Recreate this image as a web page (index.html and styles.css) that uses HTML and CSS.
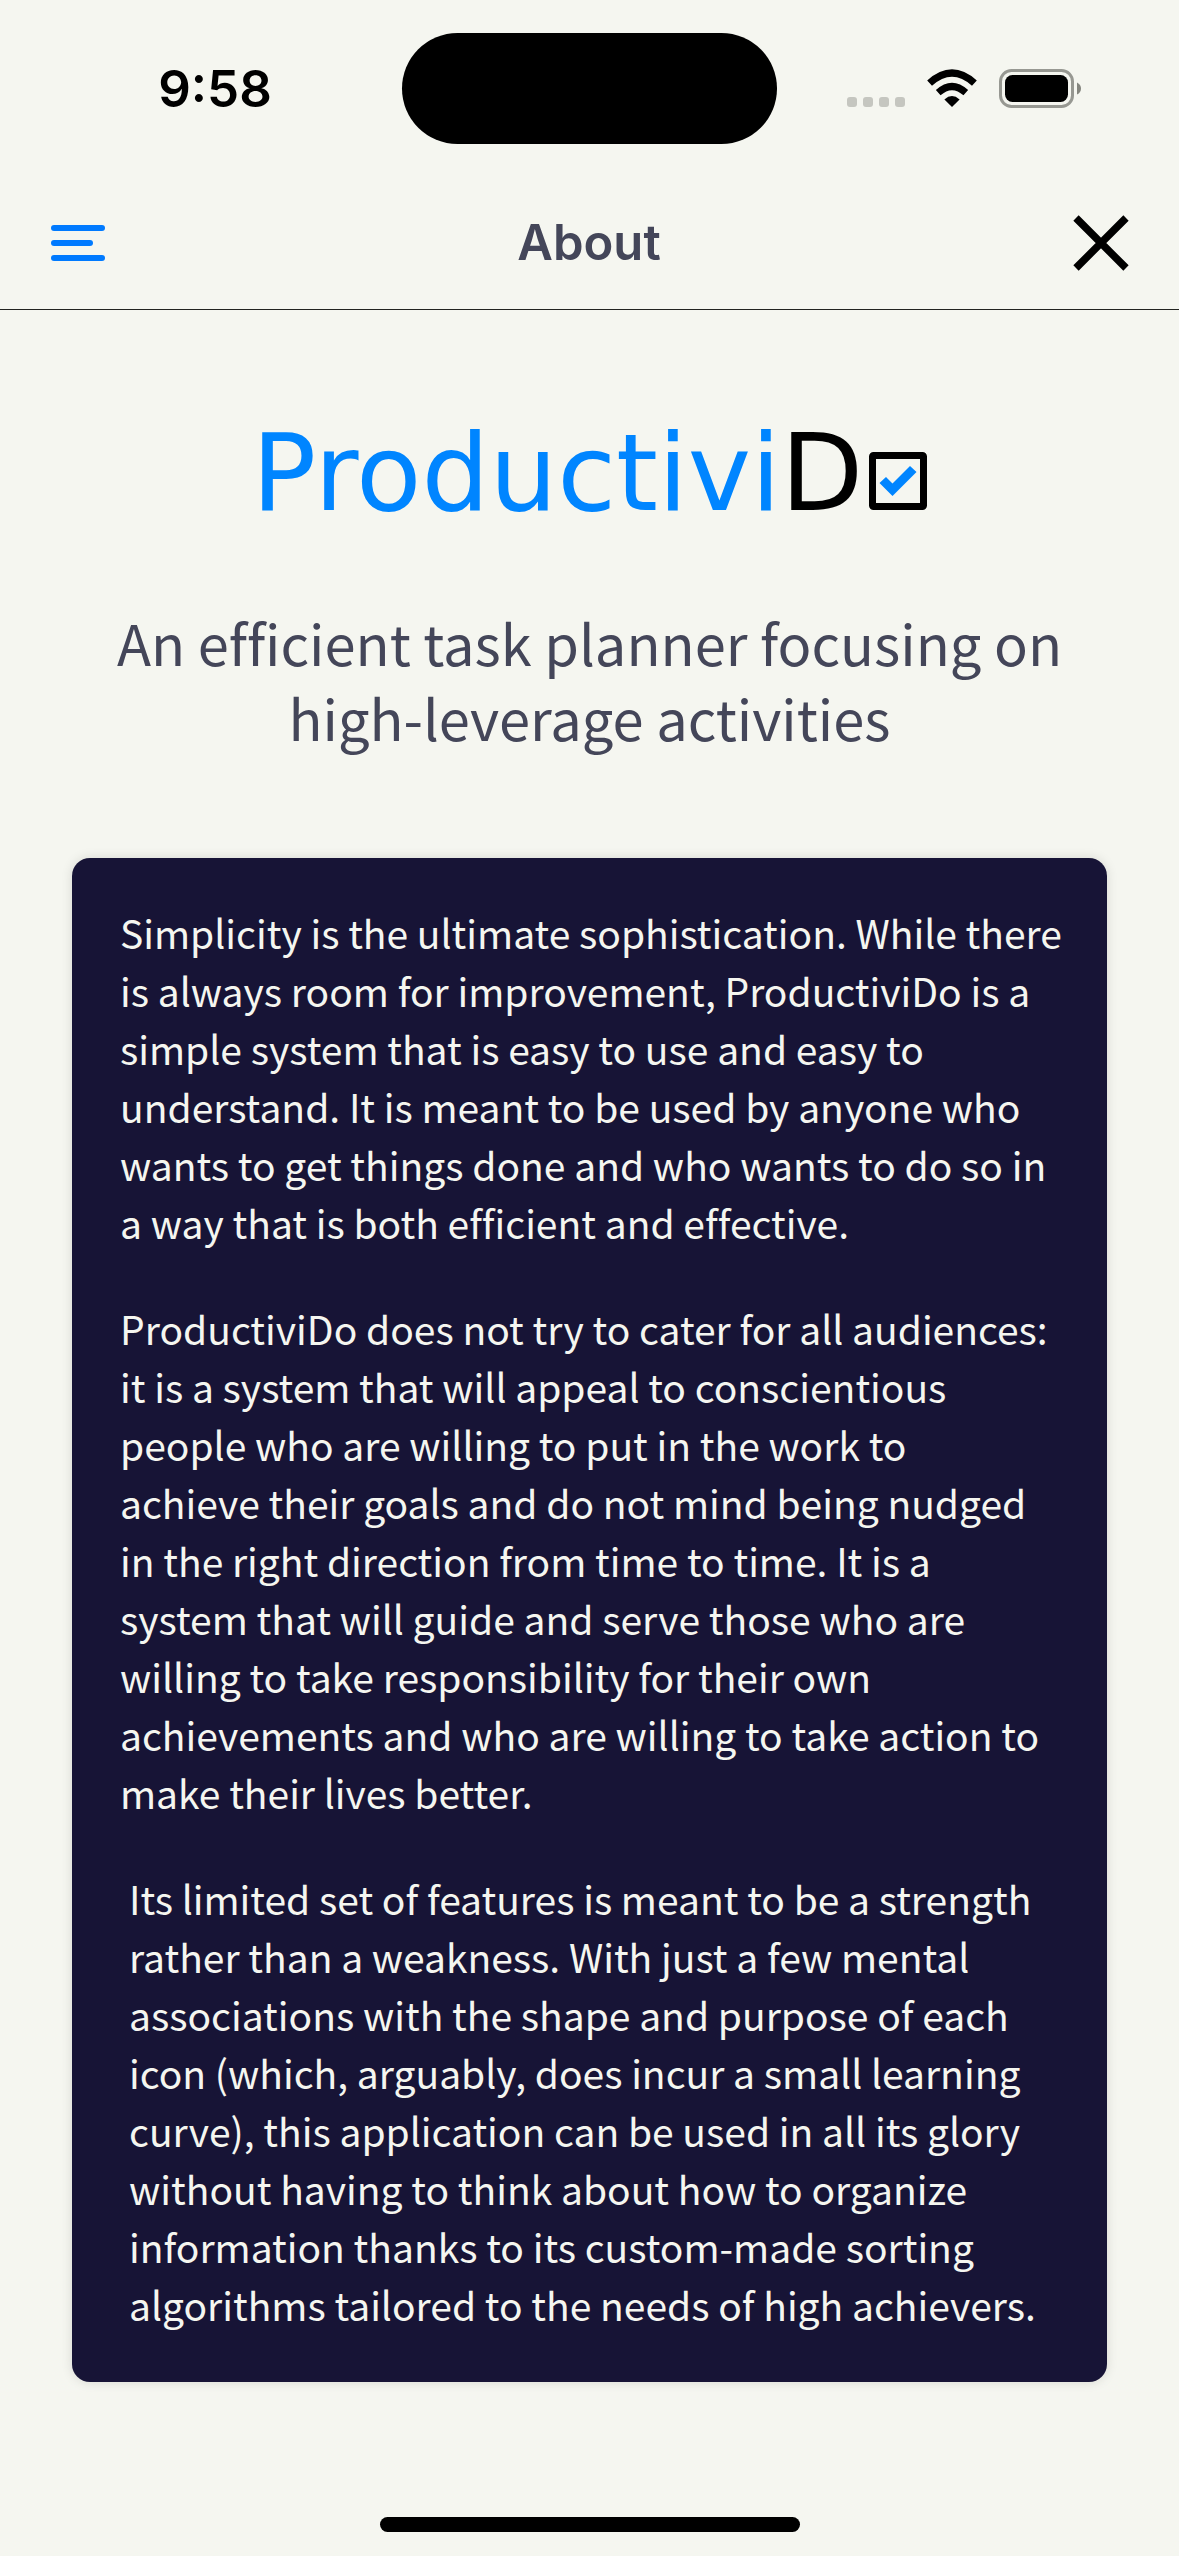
FILE: index.html
```html
<!DOCTYPE html>
<html lang="en">
<head>
<meta charset="utf-8">
<meta name="viewport" content="width=device-width, initial-scale=1">
<title>About – ProductiviDo</title>
<link rel="stylesheet" href="styles.css">
</head>
<body>
<div class="screen">
  <div class="status">
    <time class="clock">9:58</time>
    <div class="island"></div>
    <div class="indicators">
      <svg width="58" height="40" viewBox="0 0 58 40" fill="#c5c6c0" aria-hidden="true">
        <rect y="28" width="10" height="10" rx="3"/>
        <rect x="16" y="28" width="10" height="10" rx="3"/>
        <rect x="32" y="28" width="10" height="10" rx="3"/>
        <rect x="48" y="28" width="10" height="10" rx="3"/>
      </svg>
      <svg width="50" height="40" viewBox="0 0 50 40" aria-hidden="true">
        <path d="M25 38 17.400 30.400Q25 23.600 32.600 30.400Z"/>
        <path d="M11.200 23.700Q25 11.300 38.800 23.700" fill="none" stroke="#000" stroke-width="7"/>
        <path d="M2.600 14.200Q25-6 47.400 14.200" fill="none" stroke="#000" stroke-width="7.200"/>
      </svg>
      <svg width="82" height="40" viewBox="0 0 82 40" aria-hidden="true">
        <rect x="1.500" y="1.500" width="72" height="36" rx="11" fill="none" stroke="#979892" stroke-width="3"/>
        <rect x="6" y="6" width="63" height="27" rx="7.500"/>
        <path d="M78 13.500Q82 15.500 82 19.500T78 25.500Z" fill="#85867f"/>
      </svg>
    </div>
  </div>

  <header class="header">
    <button class="icon-button" type="button" aria-label="Menu">
      <svg width="54" height="36" viewBox="0 0 54 36" fill="#007aff">
        <rect width="54" height="6" rx="3"/>
        <rect y="15" width="42" height="6" rx="3"/>
        <rect y="30" width="54" height="6" rx="3"/>
      </svg>
    </button>
    <h1 class="title">About</h1>
    <button class="icon-button" type="button" aria-label="Close">
      <svg width="56" height="56" viewBox="0 0 56 56" stroke="#000" stroke-width="7.500">
        <path d="M3 3 53 53M53 3 3 53"/>
      </svg>
    </button>
  </header>

  <main class="content">
    <div class="logo">
      <span class="brand">Productivi</span><span class="brand-end">D</span>
      <svg class="box" width="58" height="58" viewBox="0 0 58 58" aria-hidden="true">
        <rect x="3.500" y="3.500" width="51" height="51" rx="1" fill="none" stroke="#000" stroke-width="7"/>
        <path d="M10.500 31 17 25 23.500 31.500 41 14 47.500 20 23.500 44Z" fill="#0085ff"/>
      </svg>
    </div>
    <p class="tagline">An efficient task planner focusing on<br>high-leverage activities</p>
    <section class="card">
      <p>Simplicity is the ultimate sophistication. While there<br>is always room for improvement, ProductiviDo is a<br>simple system that is easy to use and easy to<br>understand. It is meant to be used by anyone who<br>wants to get things done and who wants to do so in<br>a way that is both efficient and effective.</p>
      <p>ProductiviDo does not try to cater for all audiences:<br>it is a system that will appeal to conscientious<br>people who are willing to put in the work to<br>achieve their goals and do not mind being nudged<br>in the right direction from time to time. It is a<br>system that will guide and serve those who are<br>willing to take responsibility for their own<br>achievements and who are willing to take action to<br>make their lives better.</p>
      <p class="inset">Its limited set of features is meant to be a strength<br>rather than a weakness. With just a few mental<br>associations with the shape and purpose of each<br>icon (which, arguably, does incur a small learning<br>curve), this application can be used in all its glory<br>without having to think about how to organize<br>information thanks to its custom-made sorting<br>algorithms tailored to the needs of high achievers.</p>
    </section>
  </main>

  <div class="home-bar"></div>
</div>
</body>
</html>
```

FILE: styles.css
```css
* {
  box-sizing: border-box;
}

body {
  margin: 0;
  background: #f5f6f0;
  color: #444659;
  font-family: "Noto Sans CJK SC", "Noto Sans", sans-serif;
  font-variant-ligatures: none;
}

h1,
p {
  margin: 0;
}

svg {
  display: block;
}

.screen {
  display: flex;
  flex-direction: column;
  min-height: 100vh;
}

.status {
  display: grid;
  grid-template-columns: 1fr 375px 1fr;
  align-items: center;
  height: 177px;
}

.clock {
  padding-left: 28px;
  color: #000;
  font: 600 51px/60px Inter, sans-serif;
  text-align: center;
}

.island {
  height: 111px;
  border-radius: 56px;
  background: #000;
}

.indicators {
  display: flex;
  justify-content: flex-end;
  gap: 22px;
  padding-right: 98px;
}

.header {
  display: flex;
  align-items: center;
  justify-content: space-between;
  height: 133px;
  padding: 0 50px 0 51px;
  border-bottom: 1px solid #222320;
}

.icon-button {
  padding: 0;
  border: 0;
  background: none;
}

.title {
  font: 600 49px/60px Inter, sans-serif;
}

.content {
  padding: 88px 72px 0;
}

.logo {
  display: flex;
  align-items: baseline;
  justify-content: center;
  color: #000;
  font: 400 107px/150px "DejaVu Sans", sans-serif;
}

.brand {
  color: #0085ff;
}

.box {
  margin-left: 6px;
}

.tagline {
  margin-top: 56px;
  font-size: 56px;
  line-height: 75px;
  text-align: center;
  white-space: nowrap;
}

.card {
  display: flex;
  flex-direction: column;
  gap: 48px;
  margin-top: 104px;
  padding: 45px 48px 49px;
  border-radius: 18px;
  background: #171436;
  box-shadow: 0 0 12px rgba(0, 0, 0, 0.12);
  color: #f5f6f0;
  font-size: 39px;
  line-height: 58px;
  white-space: nowrap;
}

.inset {
  padding-left: 9px;
}

.home-bar {
  width: 420px;
  height: 15px;
  margin: auto auto 24px;
  border-radius: 8px;
  background: #000;
}
```
